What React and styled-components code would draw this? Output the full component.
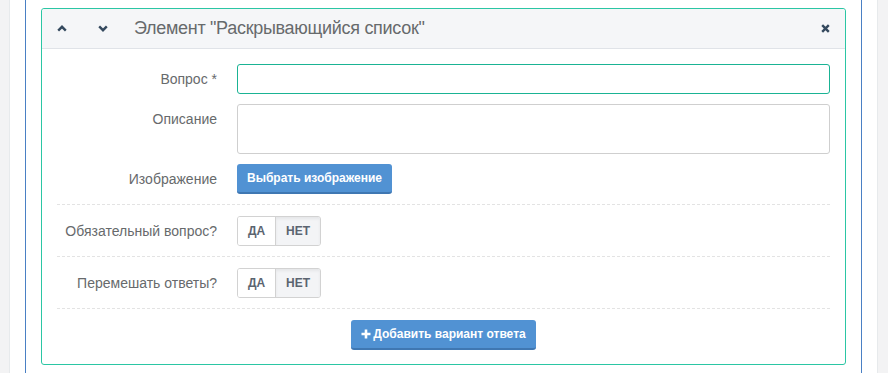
import React from "react";
import styled, { createGlobalStyle } from "styled-components";

const GlobalStyle = createGlobalStyle`
    html, body {
        margin: 0;
        padding: 0;
        background: #f3f3f4;
        font-family: "Liberation Sans", Arial, sans-serif;
    }
`;

const Page = styled.div`
    display: flex;
    height: 373px;
    padding: 0 10px 0 9px;
    box-sizing: border-box;
`;
const Sheet = styled.div`
    flex: 1;
    display: flex;
    background: #fff;
    border-left: 1px solid #e7eaec;
    border-right: 1px solid #e7eaec;
    padding: 0 15px;
`;
const Column = styled.div`
    flex: 1;
    background: #fff;
    border-left: 1px solid #4a80c4;
    border-right: 1px solid #4a80c4;
    padding: 8px 15px 0 15px;
`;
const Card = styled.div`
    border: 1px solid #2bc6a4;
    border-radius: 3px;
    background: #fff;
`;
const Header = styled.div`
    display: flex;
    align-items: center;
    height: 39px;
    background: #f5f6f8;
    border-bottom: 1px solid #e0e3e8;
    border-radius: 3px 3px 0 0;
    padding: 0 14px 0 14px;
`;
const IconButton = styled.span`
    display: inline-flex;
    align-items: center;
    justify-content: center;
    width: 12px;
    margin: 0 ${({ $gap }) => $gap}px 0 0;
    color: #34495e;
`;
const Title = styled.div`
    flex: 1;
    font-size: 18px;
    color: #676a6c;
    letter-spacing: -0.3px;
`;
const Body = styled.div`
    padding: 15px 15px 14px 15px;
`;
const Section = styled.div`
    padding: ${({ $top }) => $top}px 0 ${({ $bottom }) => $bottom}px 0;
    border-bottom: ${({ $last }) => ($last ? "none" : "1px dashed #e3e3e3")};
    display: flex;
    flex-direction: column;
    gap: 10px;
`;
const Row = styled.div`
    display: flex;
    align-items: flex-start;
    gap: 20px;
`;
const Label = styled.div`
    width: 160px;
    text-align: right;
    font-size: 14px;
    line-height: 20px;
    padding-top: 5px;
    color: #676a6c;
`;
const Field = styled.div`
    flex: 1;
    display: flex;
`;
const Input = styled.input`
    flex: 1;
    height: 30px;
    box-sizing: border-box;
    border: 1px solid ${({ $focused }) => ($focused ? "#1ab394" : "#cfcfcf")};
    border-radius: 3px;
    outline: none;
    padding: 4px 10px;
    font-family: inherit;
`;
const TextArea = styled.textarea`
    flex: 1;
    height: 50px;
    box-sizing: border-box;
    border: 1px solid #cfcfcf;
    border-radius: 3px;
    resize: none;
    outline: none;
    font-family: inherit;
`;
const Button = styled.button`
    display: inline-flex;
    align-items: center;
    gap: 2px;
    height: 30px;
    box-sizing: border-box;
    padding: 0 ${({ $pad }) => $pad}px;
    background: #5192d3;
    border: none;
    border-bottom: 2px solid #3f77b2;
    border-radius: 3px;
    color: #fff;
    font-family: inherit;
    font-size: 12px;
    font-weight: bold;
    cursor: pointer;
`;
const Toggle = styled.div`
    display: inline-flex;
    height: 30px;
    box-sizing: border-box;
    border: 1px solid #d2d2d2;
    border-radius: 3px;
    overflow: hidden;
`;
const ToggleItem = styled.span`
    display: inline-flex;
    align-items: center;
    justify-content: center;
    width: ${({ $w }) => $w}px;
    font-size: 12px;
    font-weight: bold;
    color: #5b6470;
    background: ${({ $active }) => ($active ? "#f3f4f6" : "#fff")};
    box-shadow: ${({ $active }) => ($active ? "inset 0 2px 3px rgba(0,0,0,0.06)" : "none")};
    border-left: ${({ $first }) => ($first ? "none" : "1px solid #d2d2d2")};
`;
const Footer = styled.div`
    display: flex;
    justify-content: center;
`;

const ChevronUp = () => (
    <svg width="10" height="7" viewBox="0 0 10 7">
        <path d="M1.2 5.6 L5 1.8 L8.8 5.6" fill="none" stroke="currentColor" strokeWidth="2.4" />
    </svg>
);
const ChevronDown = () => (
    <svg width="10" height="7" viewBox="0 0 10 7">
        <path d="M1.2 1.4 L5 5.2 L8.8 1.4" fill="none" stroke="currentColor" strokeWidth="2.4" />
    </svg>
);
const Close = () => (
    <svg width="9" height="9" viewBox="0 0 9 9">
        <path d="M1.2 1.2 L7.8 7.8 M7.8 1.2 L1.2 7.8" stroke="currentColor" strokeWidth="2.4" />
    </svg>
);
const Plus = () => (
    <svg width="10" height="10" viewBox="0 0 10 10">
        <path d="M5 0.5 V9.5 M0.5 5 H9.5" stroke="currentColor" strokeWidth="2.6" />
    </svg>
);

const YesNo = () => (
    <Toggle>
        <ToggleItem $w={37} $first>ДА</ToggleItem>
        <ToggleItem $w={44} $active>НЕТ</ToggleItem>
    </Toggle>
);

export default function App() {
    return (
        <>
            <GlobalStyle />
            <Page>
                <Sheet>
                    <Column>
                        <Card>
                            <Header>
                                <IconButton $gap={29}><ChevronUp /></IconButton>
                                <IconButton $gap={25}><ChevronDown /></IconButton>
                                <Title>Элемент "Раскрывающийся список"</Title>
                                <IconButton $gap={0}><Close /></IconButton>
                            </Header>
                            <Body>
                                <Section $top={0} $bottom={10}>
                                    <Row>
                                        <Label>Вопрос *</Label>
                                        <Field><Input $focused /></Field>
                                    </Row>
                                    <Row>
                                        <Label>Описание</Label>
                                        <Field><TextArea /></Field>
                                    </Row>
                                    <Row>
                                        <Label>Изображение</Label>
                                        <Field><Button $pad={10}>Выбрать изображение</Button></Field>
                                    </Row>
                                </Section>
                                <Section $top={11} $bottom={10}>
                                    <Row>
                                        <Label>Обязательный вопрос?</Label>
                                        <Field><YesNo /></Field>
                                    </Row>
                                </Section>
                                <Section $top={11} $bottom={10}>
                                    <Row>
                                        <Label>Перемешать ответы?</Label>
                                        <Field><YesNo /></Field>
                                    </Row>
                                </Section>
                                <Section $top={11} $bottom={0} $last>
                                    <Footer>
                                        <Button $pad={10}><Plus />Добавить вариант ответа</Button>
                                    </Footer>
                                </Section>
                            </Body>
                        </Card>
                    </Column>
                </Sheet>
            </Page>
        </>
    );
}
